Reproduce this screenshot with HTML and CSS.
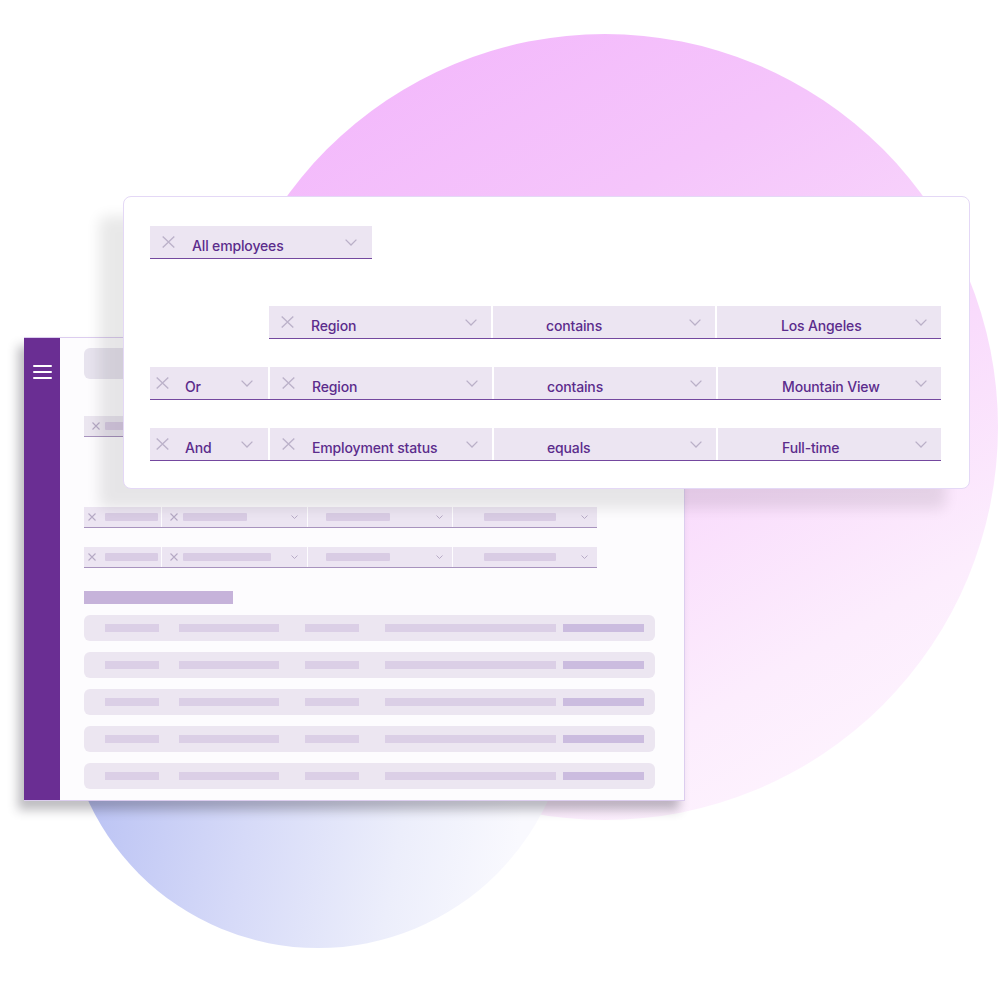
FILE: index.html
```html
<!DOCTYPE html>
<html lang="en">
<head>
<meta charset="utf-8">
<title>Filter builder</title>
<link rel="stylesheet" href="styles.css">
</head>
<body>
<div class="stage">
  <div class="blob blob-pink"></div>
  <div class="blob blob-blue"></div>

  <section class="window back">
    <aside class="sidebar">
      <div class="burger"><span></span><span></span><span></span></div>
    </aside>
    <div class="back-main">
      <div class="search"></div>
      <div class="mini-chip">
        <svg class="mx" viewBox="0 0 8 8"><path d="M0.5 0.5L7.5 7.5M7.5 0.5L0.5 7.5"/></svg>
        <span class="mbar w60"></span>
      </div>

      <div class="mini-row first">
        <div class="mcell c1"><svg class="mx" viewBox="0 0 8 8"><path d="M0.5 0.5L7.5 7.5M7.5 0.5L0.5 7.5"/></svg><span class="mbar w53"></span></div>
        <div class="mcell c2"><svg class="mx" viewBox="0 0 8 8"><path d="M0.5 0.5L7.5 7.5M7.5 0.5L0.5 7.5"/></svg><span class="mbar w64"></span><svg class="mchev" viewBox="0 0 7 4"><path d="M0.5 0.5L3.5 3.5L6.5 0.5"/></svg></div>
        <div class="mcell c3"><span class="mbar w64"></span><svg class="mchev" viewBox="0 0 7 4"><path d="M0.5 0.5L3.5 3.5L6.5 0.5"/></svg></div>
        <div class="mcell c4"><span class="mbar w72"></span><svg class="mchev" viewBox="0 0 7 4"><path d="M0.5 0.5L3.5 3.5L6.5 0.5"/></svg></div>
      </div>
      <div class="mini-row second">
        <div class="mcell c1"><svg class="mx" viewBox="0 0 8 8"><path d="M0.5 0.5L7.5 7.5M7.5 0.5L0.5 7.5"/></svg><span class="mbar w53"></span></div>
        <div class="mcell c2"><svg class="mx" viewBox="0 0 8 8"><path d="M0.5 0.5L7.5 7.5M7.5 0.5L0.5 7.5"/></svg><span class="mbar w88"></span><svg class="mchev" viewBox="0 0 7 4"><path d="M0.5 0.5L3.5 3.5L6.5 0.5"/></svg></div>
        <div class="mcell c3"><span class="mbar w64"></span><svg class="mchev" viewBox="0 0 7 4"><path d="M0.5 0.5L3.5 3.5L6.5 0.5"/></svg></div>
        <div class="mcell c4"><span class="mbar w72"></span><svg class="mchev" viewBox="0 0 7 4"><path d="M0.5 0.5L3.5 3.5L6.5 0.5"/></svg></div>
      </div>

      <div class="heading-bar"></div>

      <div class="table">
        <div class="trow"><span class="tbar b1"></span><span class="tbar b2"></span><span class="tbar b3"></span><span class="tbar b4"></span><span class="tbar b5"></span></div>
        <div class="trow"><span class="tbar b1"></span><span class="tbar b2"></span><span class="tbar b3"></span><span class="tbar b4"></span><span class="tbar b5"></span></div>
        <div class="trow"><span class="tbar b1"></span><span class="tbar b2"></span><span class="tbar b3"></span><span class="tbar b4"></span><span class="tbar b5"></span></div>
        <div class="trow"><span class="tbar b1"></span><span class="tbar b2"></span><span class="tbar b3"></span><span class="tbar b4"></span><span class="tbar b5"></span></div>
        <div class="trow"><span class="tbar b1"></span><span class="tbar b2"></span><span class="tbar b3"></span><span class="tbar b4"></span><span class="tbar b5"></span></div>
      </div>
    </div>
  </section>

  <section class="window front">
    <div class="chip">
      <svg class="x" viewBox="0 0 13 12"><path d="M0.7 0.5L12.3 11.5M12.3 0.5L0.7 11.5"/></svg>
      <span class="label">All employees</span>
      <svg class="chev" viewBox="0 0 12 7"><path d="M0.6 0.6L6 6L11.4 0.6"/></svg>
    </div>

    <div class="rules">
      <div class="rule-row indent">
        <div class="cell field">
          <svg class="x" viewBox="0 0 13 12"><path d="M0.7 0.5L12.3 11.5M12.3 0.5L0.7 11.5"/></svg>
          <span class="label">Region</span>
          <svg class="chev" viewBox="0 0 12 7"><path d="M0.6 0.6L6 6L11.4 0.6"/></svg>
        </div>
        <div class="cell op"><span class="label">contains</span><svg class="chev" viewBox="0 0 12 7"><path d="M0.6 0.6L6 6L11.4 0.6"/></svg></div>
        <div class="cell val"><span class="label">Los Angeles</span><svg class="chev" viewBox="0 0 12 7"><path d="M0.6 0.6L6 6L11.4 0.6"/></svg></div>
      </div>

      <div class="rule-row">
        <div class="cell conj">
          <svg class="x" viewBox="0 0 13 12"><path d="M0.7 0.5L12.3 11.5M12.3 0.5L0.7 11.5"/></svg>
          <span class="label">Or</span>
          <svg class="chev" viewBox="0 0 12 7"><path d="M0.6 0.6L6 6L11.4 0.6"/></svg>
        </div>
        <div class="cell field">
          <svg class="x" viewBox="0 0 13 12"><path d="M0.7 0.5L12.3 11.5M12.3 0.5L0.7 11.5"/></svg>
          <span class="label">Region</span>
          <svg class="chev" viewBox="0 0 12 7"><path d="M0.6 0.6L6 6L11.4 0.6"/></svg>
        </div>
        <div class="cell op"><span class="label">contains</span><svg class="chev" viewBox="0 0 12 7"><path d="M0.6 0.6L6 6L11.4 0.6"/></svg></div>
        <div class="cell val"><span class="label">Mountain View</span><svg class="chev" viewBox="0 0 12 7"><path d="M0.6 0.6L6 6L11.4 0.6"/></svg></div>
      </div>

      <div class="rule-row">
        <div class="cell conj">
          <svg class="x" viewBox="0 0 13 12"><path d="M0.7 0.5L12.3 11.5M12.3 0.5L0.7 11.5"/></svg>
          <span class="label">And</span>
          <svg class="chev" viewBox="0 0 12 7"><path d="M0.6 0.6L6 6L11.4 0.6"/></svg>
        </div>
        <div class="cell field">
          <svg class="x" viewBox="0 0 13 12"><path d="M0.7 0.5L12.3 11.5M12.3 0.5L0.7 11.5"/></svg>
          <span class="label">Employment status</span>
          <svg class="chev" viewBox="0 0 12 7"><path d="M0.6 0.6L6 6L11.4 0.6"/></svg>
        </div>
        <div class="cell op"><span class="label">equals</span><svg class="chev" viewBox="0 0 12 7"><path d="M0.6 0.6L6 6L11.4 0.6"/></svg></div>
        <div class="cell val"><span class="label">Full-time</span><svg class="chev" viewBox="0 0 12 7"><path d="M0.6 0.6L6 6L11.4 0.6"/></svg></div>
      </div>
    </div>
  </section>
</div>
</body>
</html>
```

FILE: styles.css
```css
html, body {
  margin: 0;
  padding: 0;
  background: #ffffff;
}

body {
  font-family: Inter, "Noto Sans", "Liberation Sans", sans-serif;
}

.stage {
  position: relative;
  width: 1001px;
  height: 1001px;
  overflow: hidden;
  background: #ffffff;
}

/* background blobs */
.blob {
  position: absolute;
  border-radius: 50%;
}

.blob-pink {
  left: 212px;
  top: 34px;
  width: 786px;
  height: 786px;
  background: linear-gradient(150deg, #f2b3fc 0%, #f5c5fb 32%, #f9dbfc 58%, #fcedfd 78%, #fff8ff 100%);
}

.blob-blue {
  left: 65px;
  top: 442px;
  width: 506px;
  height: 506px;
  background: linear-gradient(100deg, #b5bef3 8%, #d6daf8 42%, #eceefb 68%, #f9f9fe 88%);
}

/* windows */
.window {
  position: absolute;
  box-sizing: border-box;
}

.back {
  left: 24px;
  top: 337px;
  width: 661px;
  height: 464px;
  display: flex;
  background: #fdfcfe;
  border: 1px solid #dccdef;
  border-left: none;
  box-shadow: -6px 9px 10px rgba(40, 35, 50, 0.3);
}

.sidebar {
  width: 36px;
  flex: none;
  background: #6a2e93;
  padding: 27px 0 0 9px;
  box-sizing: border-box;
}

.burger span {
  display: block;
  width: 19px;
  height: 2px;
  margin-bottom: 4px;
  background: #ffffff;
  border-radius: 1px;
}

.back-main {
  flex: 1;
  display: flex;
  flex-direction: column;
  align-items: flex-start;
  padding: 10px 0 0 24px;
}

.search {
  width: 240px;
  height: 31px;
  border-radius: 6px;
  background: #e7e3ee;
}

.mini-chip {
  margin-top: 37px;
  width: 144px;
  height: 20px;
  display: flex;
  align-items: center;
  gap: 5px;
  padding-left: 8px;
  box-sizing: content-box;
  background: #ebe6f0;
  border-bottom: 1px solid #a893be;
}

.mini-row {
  display: grid;
  grid-template-columns: 77px 145px 144px 144px;
  column-gap: 1px;
  border-bottom: 1px solid #a893be;
}

.mini-row.first {
  margin-top: 70px;
}

.mini-row.second {
  margin-top: 19px;
}

.mcell {
  height: 20px;
  display: flex;
  align-items: center;
  background: #ece5f2;
}

.mcell.c1 {
  padding-left: 4px;
  gap: 9px;
}

.mcell.c2 {
  padding-left: 8px;
  gap: 5px;
}

.mcell.c3 {
  padding-left: 18px;
}

.mcell.c4 {
  padding-left: 31px;
}

.mx {
  width: 8px;
  height: 8px;
  flex: none;
  fill: none;
  stroke: #b5a9c4;
  stroke-width: 1.1;
}

.mchev {
  width: 7px;
  height: 4px;
  flex: none;
  margin-left: auto;
  margin-right: 9px;
  fill: none;
  stroke: #b8abc7;
  stroke-width: 1;
}

.mbar {
  display: block;
  height: 8px;
  background: #d9cce4;
  border-radius: 1px;
}

.w53 { width: 53px; }
.w60 { width: 60px; }
.w64 { width: 64px; }
.w72 { width: 72px; }
.w88 { width: 88px; }

.heading-bar {
  margin-top: 23px;
  width: 149px;
  height: 13px;
  background: #c6b3da;
}

.table {
  margin-top: 11px;
  display: flex;
  flex-direction: column;
  gap: 11px;
}

.trow {
  width: 571px;
  height: 26px;
  display: flex;
  align-items: center;
  border-radius: 6px;
  background: #ece6f1;
}

.tbar {
  display: block;
  height: 8px;
  background: #dbcfe6;
}

.tbar.b1 { margin-left: 21px; width: 54px; }
.tbar.b2 { margin-left: 20px; width: 100px; }
.tbar.b3 { margin-left: 26px; width: 54px; }
.tbar.b4 { margin-left: 26px; width: 171px; }
.tbar.b5 { margin-left: 7px; width: 81px; background: #cbbcdf; }

/* front window */
.front {
  left: 123px;
  top: 196px;
  width: 847px;
  height: 293px;
  padding: 29px 0 0 26px;
  background: #ffffff;
  border: 1px solid #e4d8f6;
  border-radius: 8px;
  box-shadow: -24px 20px 14px rgba(0, 0, 0, 0.09);
}

.chip,
.cell {
  height: 32px;
  display: flex;
  align-items: center;
  background: #ece5f2;
}

.chip {
  width: 222px;
  padding-left: 12px;
  box-sizing: border-box;
  border-bottom: 1px solid #74489f;
  height: 33px;
}

.rules {
  margin-top: 47px;
  display: flex;
  flex-direction: column;
  gap: 28px;
}

.rule-row {
  width: 791px;
  display: grid;
  grid-template-columns: 118px 222px 222px 223px;
  column-gap: 2px;
  border-bottom: 1px solid #74489f;
}

.rule-row.indent {
  width: 672px;
  margin-left: 119px;
  grid-template-columns: 222px 222px 224px;
}

.cell.conj {
  padding-left: 6px;
}

.cell.field {
  padding-left: 12px;
}

.cell.op {
  padding-left: 53px;
}

.cell.val {
  padding-left: 64px;
}

.x {
  width: 13px;
  height: 12px;
  flex: none;
  margin-right: 17px;
  fill: none;
  stroke: #bcb2ca;
  stroke-width: 1.4;
}

.cell.conj .x {
  margin-right: 16px;
}

.label {
  padding-top: 6px;
  font-size: 14px;
  font-weight: 500;
  letter-spacing: -0.15px;
  line-height: 17px;
  color: #5b2c8c;
  white-space: nowrap;
}

.chev {
  width: 12px;
  height: 7px;
  flex: none;
  margin-left: auto;
  margin-right: 14px;
  fill: none;
  stroke: #bab0c8;
  stroke-width: 1.3;
}

.chip .chev,
.cell.conj .chev {
  margin-right: 15px;
}
```
